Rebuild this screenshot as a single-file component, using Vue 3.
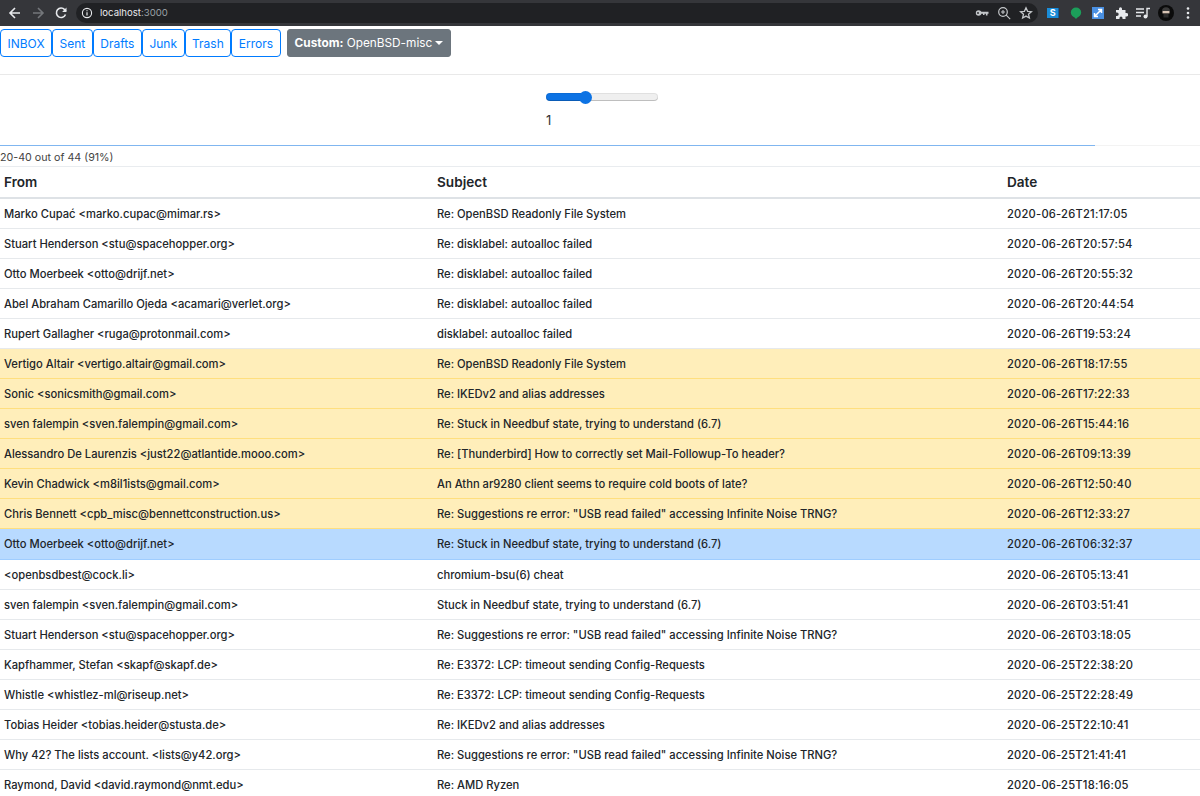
<script setup>
import { ref } from 'vue'

const folders = ['INBOX', 'Sent', 'Drafts', 'Junk', 'Trash', 'Errors']
const level = ref(1)

const messages = [
  { from: 'Marko Cupać <marko.cupac@mimar.rs>', subject: 'Re: OpenBSD Readonly File System', date: '2020-06-26T21:17:05' },
  { from: 'Stuart Henderson <stu@spacehopper.org>', subject: 'Re: disklabel: autoalloc failed', date: '2020-06-26T20:57:54' },
  { from: 'Otto Moerbeek <otto@drijf.net>', subject: 'Re: disklabel: autoalloc failed', date: '2020-06-26T20:55:32' },
  { from: 'Abel Abraham Camarillo Ojeda <acamari@verlet.org>', subject: 'Re: disklabel: autoalloc failed', date: '2020-06-26T20:44:54' },
  { from: 'Rupert Gallagher <ruga@protonmail.com>', subject: 'disklabel: autoalloc failed', date: '2020-06-26T19:53:24' },
  { from: 'Vertigo Altair <vertigo.altair@gmail.com>', subject: 'Re: OpenBSD Readonly File System', date: '2020-06-26T18:17:55', kind: 'warn' },
  { from: 'Sonic <sonicsmith@gmail.com>', subject: 'Re: IKEDv2 and alias addresses', date: '2020-06-26T17:22:33', kind: 'warn' },
  { from: 'sven falempin <sven.falempin@gmail.com>', subject: 'Re: Stuck in Needbuf state, trying to understand (6.7)', date: '2020-06-26T15:44:16', kind: 'warn' },
  { from: 'Alessandro De Laurenzis <just22@atlantide.mooo.com>', subject: 'Re: [Thunderbird] How to correctly set Mail-Followup-To header?', date: '2020-06-26T09:13:39', kind: 'warn' },
  { from: 'Kevin Chadwick <m8il1ists@gmail.com>', subject: 'An Athn ar9280 client seems to require cold boots of late?', date: '2020-06-26T12:50:40', kind: 'warn' },
  { from: 'Chris Bennett <cpb_misc@bennettconstruction.us>', subject: 'Re: Suggestions re error: "USB read failed" accessing Infinite Noise TRNG?', date: '2020-06-26T12:33:27', kind: 'warn' },
  { from: 'Otto Moerbeek <otto@drijf.net>', subject: 'Re: Stuck in Needbuf state, trying to understand (6.7)', date: '2020-06-26T06:32:37', kind: 'active' },
  { from: '<openbsdbest@cock.li>', subject: 'chromium-bsu(6) cheat', date: '2020-06-26T05:13:41' },
  { from: 'sven falempin <sven.falempin@gmail.com>', subject: 'Stuck in Needbuf state, trying to understand (6.7)', date: '2020-06-26T03:51:41' },
  { from: 'Stuart Henderson <stu@spacehopper.org>', subject: 'Re: Suggestions re error: "USB read failed" accessing Infinite Noise TRNG?', date: '2020-06-26T03:18:05' },
  { from: 'Kapfhammer, Stefan <skapf@skapf.de>', subject: 'Re: E3372: LCP: timeout sending Config-Requests', date: '2020-06-25T22:38:20' },
  { from: 'Whistle <whistlez-ml@riseup.net>', subject: 'Re: E3372: LCP: timeout sending Config-Requests', date: '2020-06-25T22:28:49' },
  { from: 'Tobias Heider <tobias.heider@stusta.de>', subject: 'Re: IKEDv2 and alias addresses', date: '2020-06-25T22:10:41' },
  { from: 'Why 42? The lists account. <lists@y42.org>', subject: 'Re: Suggestions re error: "USB read failed" accessing Infinite Noise TRNG?', date: '2020-06-25T21:41:41' },
  { from: 'Raymond, David <david.raymond@nmt.edu>', subject: 'Re: AMD Ryzen', date: '2020-06-25T18:16:05' }
]
</script>

<template>
  <div class="page">
    <header class="chrome">
      <svg class="nav" width="14" height="14" viewBox="0 0 14 14"><path d="M12 7H2.5M7 2 2 7l5 5" fill="none" stroke="#e8eaed" stroke-width="1.6" /></svg>
      <svg class="nav" width="14" height="14" viewBox="0 0 14 14"><path d="M2 7h9.5M7 2l5 5-5 5" fill="none" stroke="#74777b" stroke-width="1.6" /></svg>
      <svg class="nav" width="14" height="14" viewBox="0 0 14 14"><path d="M11.5 8.500A4.700 4.700 0 1 1 10.600 3.600L12 5" fill="none" stroke="#e8eaed" stroke-width="1.6" /><path d="M12.500 1.500v4.400H8.100z" fill="#e8eaed" /></svg>
      <div class="omnibox">
        <svg width="12" height="12" viewBox="0 0 12 12"><circle cx="6" cy="6" r="4.600" fill="none" stroke="#e8eaed" stroke-width="1.100" /><path d="M6 5.200v3.200M6 3.300v1" stroke="#e8eaed" stroke-width="1.200" /></svg>
        <span class="url">localhost<span class="port">:3000</span></span>
        <span class="omni-actions">
          <svg width="14" height="14" viewBox="0 0 14 14"><circle cx="3.600" cy="7" r="2.800" fill="#c4c7ca" /><circle cx="3" cy="7" r="0.900" fill="#202124" /><path d="M5 5.800h8.500v2h-1v1.600h-1.600V7.800H9.500v1.200H8V7.800H5z" fill="#c4c7ca" /></svg>
          <svg width="14" height="14" viewBox="0 0 14 14"><circle cx="6" cy="6" r="4.300" fill="none" stroke="#c4c7ca" stroke-width="1.200" /><path d="m9.200 9.200 4 4M4 6h4M6 4v4" stroke="#c4c7ca" stroke-width="1.100" /></svg>
          <svg width="14" height="14" viewBox="0 0 14 14"><path d="m7 1.800 1.600 3.500 3.800.4-2.900 2.500.9 3.800L7 10.100 3.600 12l.9-3.800-2.900-2.500 3.800-.4z" fill="none" stroke="#c4c7ca" stroke-width="1.300" /></svg>
        </span>
      </div>
      <div class="extensions">
        <span class="ext-s">S</span>
        <svg width="14" height="14" viewBox="0 0 14 14"><path d="M7 1.500a5.200 5 0 0 1 5.200 5c0 2.600-2.200 4.400-3.800 5L7 13l-1.400-1.500c-1.600-.6-3.800-2.400-3.800-5a5.200 5 0 0 1 5.200-5z" fill="#1c9e5a" /></svg>
        <svg width="12" height="12" viewBox="0 0 12 12"><rect width="12" height="12" fill="#4a90e2" /><path d="M2.500 9.500 9.500 2.500M6 2.500h3.500V6M2.500 6v3.500H6" fill="none" stroke="#fff" stroke-width="1.500" /></svg>
        <svg width="14" height="14" viewBox="0 0 14 14"><path d="M2 4h3V2.800a1.500 1.500 0 0 1 3 0V4h3.500v3h1a1.700 1.700 0 0 1 0 3.400h-1V13H8.500v-1a1.500 1.500 0 0 0-3 0v1H2v-3h1a1.700 1.700 0 0 0 0-3.400H2z" fill="#e8eaed" /></svg>
        <svg width="16" height="14" viewBox="0 0 16 14"><path d="M1 3h8M1 6.500h8M1 10h5" stroke="#e8eaed" stroke-width="1.400" /><path d="M12 10.500V2.500h3" fill="none" stroke="#e8eaed" stroke-width="1.400" /><circle cx="10.500" cy="10.500" r="2" fill="#e8eaed" /></svg>
        <svg width="16" height="16" viewBox="0 0 16 16"><circle cx="8" cy="8" r="8" fill="#0b0b0b" /><path d="M4 6a4 3.800 0 0 1 8 0z" fill="#3a3a3a" /><rect x="4.500" y="6" width="7" height="2.400" fill="#d8c4b4" /><path d="M5.500 9h5v3.500h-5z" fill="#2c2c2c" /></svg>
        <svg width="4" height="14" viewBox="0 0 4 14"><circle cx="2" cy="2.500" r="1.300" fill="#e8eaed" /><circle cx="2" cy="7" r="1.300" fill="#e8eaed" /><circle cx="2" cy="11.500" r="1.300" fill="#e8eaed" /></svg>
      </div>
    </header>

    <nav class="toolbar">
      <div class="folders">
        <button v-for="f in folders" :key="f" class="folder">{{ f }}</button>
      </div>
      <button class="custom"><b>Custom:</b> OpenBSD-misc<i class="caret"></i></button>
    </nav>

    <section class="slider-box">
      <input v-model="level" class="slider" type="range" min="0" max="3" step="1" />
      <div class="level">{{ level }}</div>
    </section>

    <div class="progress"><div class="progress-bar" style="width: 91.25%"></div></div>
    <div class="summary">20-40 out of 44 (91%)</div>

    <table class="list">
      <colgroup>
        <col class="col-from" />
        <col class="col-subject" />
        <col />
      </colgroup>
      <thead>
        <tr><th>From</th><th>Subject</th><th>Date</th></tr>
      </thead>
      <tbody>
        <tr v-for="(m, i) in messages" :key="i" :class="m.kind">
          <td>{{ m.from }}</td>
          <td>{{ m.subject }}</td>
          <td class="date">{{ m.date }}</td>
        </tr>
      </tbody>
    </table>
  </div>
</template>

<style>
html, body {
  height: 100%;
  overflow: hidden;
}
</style>

<style scoped>
.page {
  height: 796px;
  overflow: hidden;
  background: #fff;
  color: #212529;
  font-family: Inter, "Noto Sans", sans-serif;
}

.chrome {
  height: 26px;
  display: flex;
  align-items: center;
  background: #35363a;
  box-sizing: border-box;
  padding: 0 0 1px 8px;
}

.nav {
  margin-right: 9px;
  flex: none;
}

.omnibox {
  width: 962px;
  height: 20px;
  margin-left: -1px;
  border-radius: 10px;
  background: #202124;
  display: flex;
  align-items: center;
  padding-left: 5px;
  box-sizing: border-box;
}

.url {
  margin-left: 7px;
  font-size: 9.6px;
  color: #e8eaed;
}

.port {
  color: #9aa0a6;
}

.omni-actions {
  margin-left: auto;
  display: flex;
  gap: 8px;
  padding-right: 5px;
}

.extensions {
  padding-left: 4px;
  display: grid;
  grid-template-columns: repeat(7, 22.5px);
  justify-items: center;
  align-items: center;
}

.ext-s {
  width: 11px;
  height: 10px;
  background: #1a8cd8;
  border-right: 1px solid #0f5fa0;
  color: #fff;
  font-size: 9px;
  font-weight: 700;
  line-height: 10px;
  text-align: center;
}

.toolbar {
  display: flex;
  align-items: center;
  padding-top: 3px;
  height: 28px;
  padding-bottom: 17px;
  border-bottom: 1px solid #e9e9e9;
}

.folders {
  display: flex;
  margin-right: 6px;
}

.folder {
  height: 28px;
  padding: 0 6.5px;
  border: 1px solid #007bff;
  border-radius: 4px;
  background: #fff;
  color: #007bff;
  font: 12px Inter, sans-serif;
}

.custom {
  height: 28px;
  padding: 0 7px;
  border: 1px solid #6c757d;
  border-radius: 3px;
  background: #6c757d;
  color: #fff;
  font: 11.8px Inter, sans-serif;
}

.custom b {
  font-weight: 700;
}

.caret {
  display: inline-block;
  margin-left: 3px;
  vertical-align: 2px;
  border-top: 4px solid #fff;
  border-left: 4px solid transparent;
  border-right: 4px solid transparent;
}

.slider-box {
  height: 70px;
  display: flex;
  flex-direction: column;
  align-items: flex-start;
  padding-left: 546px;
}

.slider {
  -webkit-appearance: none;
  appearance: none;
  width: 112px;
  height: 8px;
  margin: 18px 0 0;
  border-radius: 4px;
  background: linear-gradient(to right, #0d73e4 0 35%, #efefef 35% 100%);
  box-shadow: inset 0 -1px 0 rgba(0, 0, 0, 0.15), inset 0 0 0 1px rgba(0, 0, 0, 0.06);
}

.slider::-webkit-slider-thumb {
  -webkit-appearance: none;
  width: 13px;
  height: 13px;
  border-radius: 50%;
  background: #0d73e4;
}

.level {
  margin-top: 10px;
  font-size: 13px;
  line-height: 18px;
  color: #333;
}

.progress {
  height: 1px;
  background: #f3f3f3;
}

.progress-bar {
  height: 100%;
  background: #80b6f0;
}

.summary {
  height: 21px;
  box-sizing: border-box;
  border-bottom: 1px solid #e9ecef;
  font-size: 10.7px;
  line-height: 23px;
  color: #444;
}

.list {
  width: 1200px;
  table-layout: fixed;
  border-collapse: collapse;
}

.col-from {
  width: 433px;
}

.col-subject {
  width: 570px;
}

th,
td {
  padding: 0 4px;
  text-align: left;
  white-space: nowrap;
  overflow: hidden;
}

th {
  height: 30px;
  font-size: 13.6px;
  font-weight: 600;
  border-bottom: 2px solid #dee2e6;
}

td {
  height: 29px;
  font-size: 11.2px;
  font-weight: 550;
  border-bottom: 1px solid #e6e9ec;
}

td.date {
  letter-spacing: 0.2px;
}

tr.warn td {
  background: #ffeeba;
  border-bottom-color: #ffdf7e;
}

tr.active td {
  height: 30px;
  background: #b8daff;
  border-bottom-color: #9fcdff;
}
</style>
